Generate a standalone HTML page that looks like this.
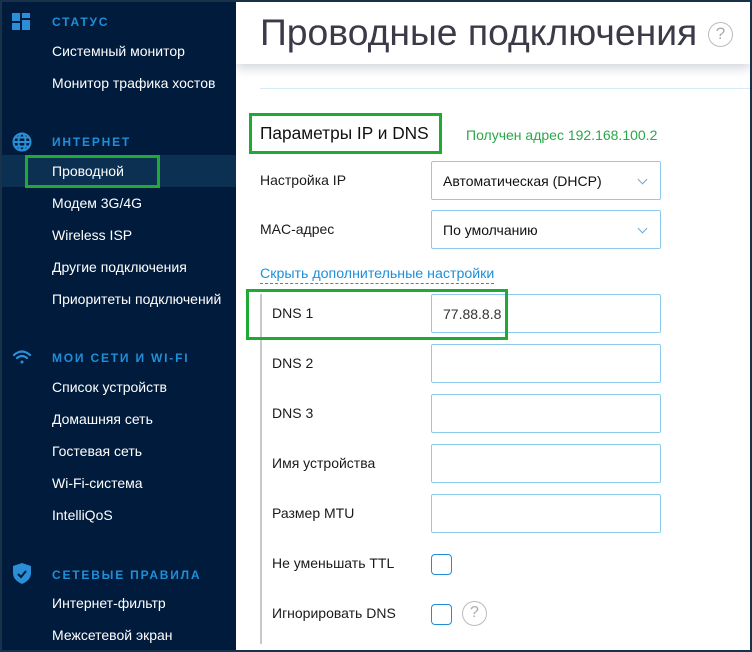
<!DOCTYPE html>
<html><head><meta charset="utf-8"><style>
*{margin:0;padding:0;box-sizing:border-box}
body{width:752px;height:652px;overflow:hidden;background:#17324a;font-family:"Liberation Sans",sans-serif;position:relative}
.sb{position:absolute;left:2px;top:2px;width:234px;height:648px;background:#001b3c}
.ct{position:absolute;left:236px;top:2px;width:514px;height:648px;background:#fff;overflow:hidden}
.a{position:absolute;white-space:nowrap}
.h{color:#1e8fd8;font-weight:bold;font-size:12px;letter-spacing:1.8px}
.i{color:#fff;font-size:14px}
.lbl{font-size:14px;color:#1a1a1a}
.box{position:absolute;border:1px solid #8ccbec;border-radius:2px;background:#fff}
.cb{position:absolute;border:1.5px solid #1e8fd8;border-radius:4px;width:21px;height:21px}
.chev{position:absolute;right:14px;top:14px;width:7px;height:7px;border-right:1.2px solid #6aa8d6;border-bottom:1.2px solid #6aa8d6;transform:rotate(45deg)}
.g{position:absolute;border:3px solid #1faa34}
</style></head><body>
<div class="sb"></div>
<div class="a" style="left:2px;top:155px;width:234px;height:32px;background:#0b3052"></div>
<svg class="a" style="left:12px;top:13px" width="20" height="18"><rect x="0" y="0" width="8" height="8" fill="#2a8fd6"/><rect x="10" y="0" width="8" height="5" fill="#2a8fd6"/><rect x="0" y="10" width="8" height="7" fill="#2a8fd6"/><rect x="10" y="7" width="8" height="10" fill="#2a8fd6"/></svg>
<svg class="a" style="left:12px;top:132px" width="20" height="20" fill="none" stroke="#2a8fd6" stroke-width="2"><circle cx="10" cy="10" r="8.5"/><ellipse cx="10" cy="10" rx="3.5" ry="8.5"/><line x1="1.5" y1="10" x2="18.5" y2="10"/><line x1="3" y1="5.5" x2="17" y2="5.5"/><line x1="3" y1="14.5" x2="17" y2="14.5"/></svg>
<svg class="a" style="left:12px;top:349px" width="20" height="16" fill="none" stroke="#2a8fd6" stroke-width="2.2" stroke-linecap="round"><path d="M2 6 Q10 -1 18 6"/><path d="M5 9 Q10 5 15 9"/><circle cx="10" cy="13" r="1.5" fill="#2a8fd6" stroke="none"/></svg>
<svg class="a" style="left:13px;top:563px" width="18" height="21"><path d="M9 0 L18 3 V10 Q18 17 9 21 Q0 17 0 10 V3 Z" fill="#2a8fd6"/><path d="M5 11 L8 14 L13 8" stroke="#001b3c" stroke-width="2" fill="none"/></svg>
<div class="a h" style="left:52px;top:15px">СТАТУС</div>
<div class="a i" style="left:52px;top:43px">Системный монитор</div>
<div class="a i" style="left:52px;top:75px">Монитор трафика хостов</div>
<div class="a h" style="left:52px;top:135px">ИНТЕРНЕТ</div>
<div class="a i" style="left:52px;top:163px">Проводной</div>
<div class="a i" style="left:52px;top:195px">Модем 3G/4G</div>
<div class="a i" style="left:52px;top:227px">Wireless ISP</div>
<div class="a i" style="left:52px;top:259px">Другие подключения</div>
<div class="a i" style="left:52px;top:291px">Приоритеты подключений</div>
<div class="a h" style="left:52px;top:351px">МОИ СЕТИ И WI-FI</div>
<div class="a i" style="left:52px;top:379px">Список устройств</div>
<div class="a i" style="left:52px;top:411px">Домашняя сеть</div>
<div class="a i" style="left:52px;top:443px">Гостевая сеть</div>
<div class="a i" style="left:52px;top:475px">Wi-Fi-система</div>
<div class="a i" style="left:52px;top:507px">IntelliQoS</div>
<div class="a h" style="left:52px;top:568px">СЕТЕВЫЕ ПРАВИЛА</div>
<div class="a i" style="left:52px;top:595px">Интернет-фильтр</div>
<div class="a i" style="left:52px;top:627px">Межсетевой экран</div>
<div class="g" style="left:25px;top:155px;width:135px;height:33px"></div>

<div class="ct">
<div class="a" style="left:0;top:0;width:514px;height:62px;background:#fff;box-shadow:0 4px 10px rgba(0,20,60,0.18)"></div>
<div class="a" style="left:24px;top:9px;font-size:37.3px;color:#3a3a48">Проводные подключения</div>
<div class="a" style="left:472px;top:20px;width:25px;height:25px;border:1.5px solid #bbb;border-radius:50%;color:#aaa;font-size:17px;text-align:center;line-height:22px">?</div>
<div class="a" style="left:24px;top:86px;width:490px;height:1px;background:#d4ecf6"></div>
<div class="a" style="left:24px;top:121px;font-size:17.3px;color:#111">Параметры IP и DNS</div>
<div class="a" style="left:230px;top:125px;font-size:14px;color:#2aa84a">Получен адрес 192.168.100.2</div>
<div class="a lbl" style="left:24px;top:170px">Настройка IP</div>
<div class="box" style="left:195px;top:159px;width:230px;height:39px"><span class="a" style="left:11px;top:11px;font-size:14px;color:#111">Автоматическая (DHCP)</span><div class="chev"></div></div>
<div class="a lbl" style="left:24px;top:219px">MAC-адрес</div>
<div class="box" style="left:195px;top:208px;width:230px;height:39px"><span class="a" style="left:11px;top:11px;font-size:14px;color:#111">По умолчанию</span><div class="chev"></div></div>
<div class="a" style="left:24px;top:264px;font-size:14.2px;color:#1e8fd8;border-bottom:1px dashed #1e8fd8;line-height:17px">Скрыть дополнительные настройки</div>
<div class="a" style="left:24px;top:292px;width:2px;height:350px;background:#c8c8c8"></div>
<div class="a lbl" style="left:36px;top:303px">DNS 1</div>
<div class="box" style="left:195px;top:292px;width:230px;height:39px"><span class="a" style="left:11px;top:11px;font-size:14px;color:#333">77.88.8.8</span></div>
<div class="a lbl" style="left:36px;top:353px">DNS 2</div>
<div class="box" style="left:195px;top:342px;width:230px;height:39px"></div>
<div class="a lbl" style="left:36px;top:403px">DNS 3</div>
<div class="box" style="left:195px;top:392px;width:230px;height:39px"></div>
<div class="a lbl" style="left:36px;top:453px">Имя устройства</div>
<div class="box" style="left:195px;top:442px;width:230px;height:39px"></div>
<div class="a lbl" style="left:36px;top:503px">Размер MTU</div>
<div class="box" style="left:195px;top:492px;width:230px;height:39px"></div>
<div class="a lbl" style="left:36px;top:553px">Не уменьшать TTL</div>
<div class="cb" style="left:195px;top:552px"></div>
<div class="a lbl" style="left:36px;top:603px">Игнорировать DNS</div>
<div class="cb" style="left:195px;top:602px"></div>
<div class="a" style="left:226px;top:599px;width:25px;height:25px;border:1.5px solid #bbb;border-radius:50%;color:#aaa;font-size:16px;text-align:center;line-height:22px">?</div>
<div class="g" style="left:13px;top:111px;width:193px;height:41px"></div>
<div class="g" style="left:10px;top:287px;width:262px;height:51px"></div>
</div>
</body></html>
